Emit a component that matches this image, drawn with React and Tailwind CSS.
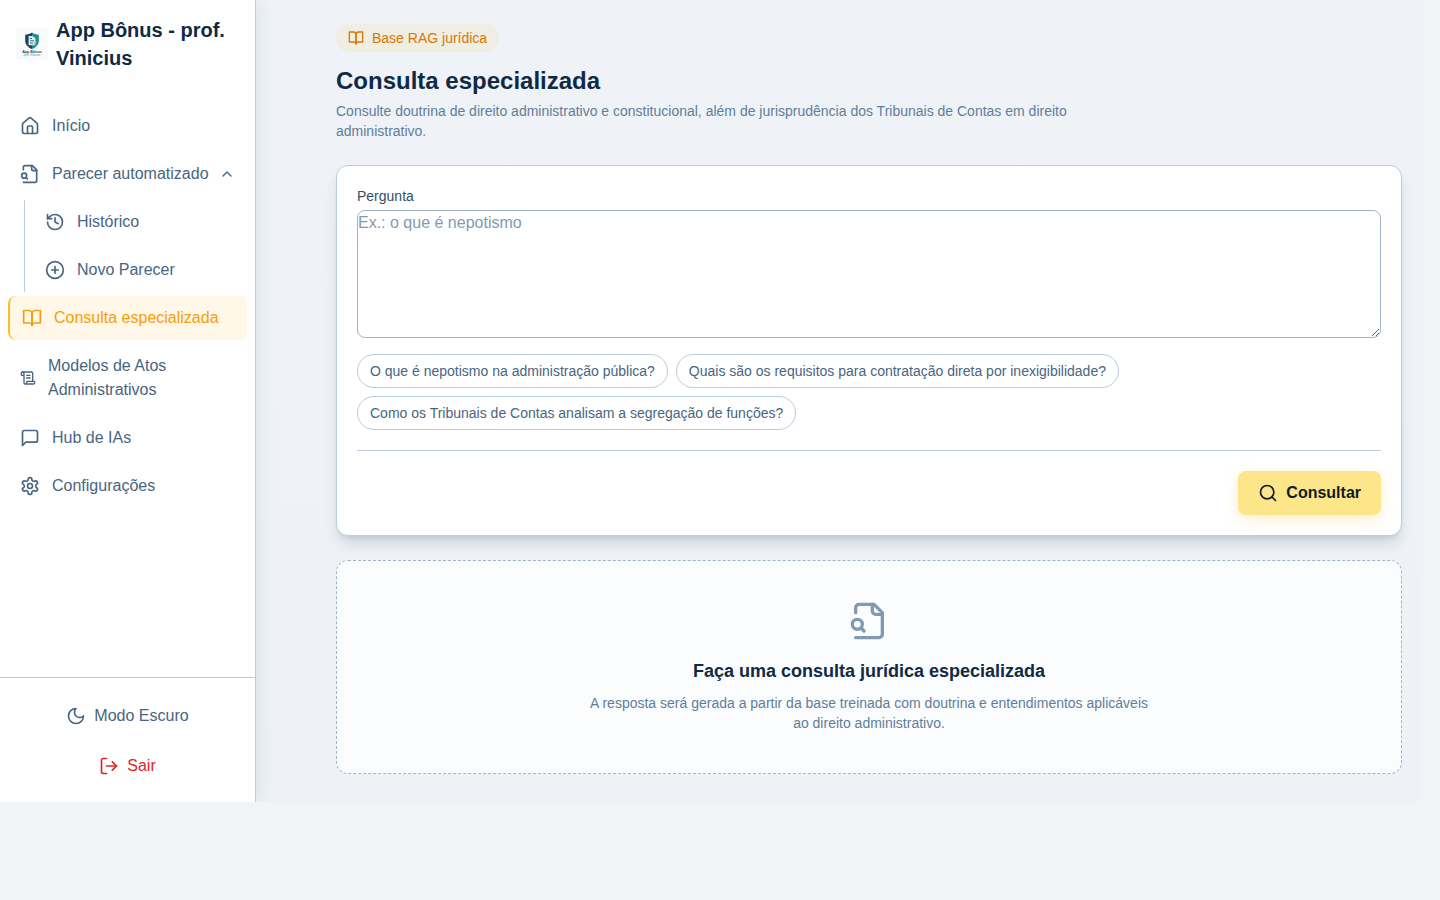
import React from "react";

const ICONS = {
  home: [
    "M15 21v-8a1 1 0 0 0-1-1h-4a1 1 0 0 0-1 1v8",
    "M3 10a2 2 0 0 1 .709-1.528l7-5.999a2 2 0 0 1 2.582 0l7 5.999A2 2 0 0 1 21 10v9a2 2 0 0 1-2 2H5a2 2 0 0 1-2-2z",
  ],
  fileSearch: [
    "M14 2v4a2 2 0 0 0 2 2h4",
    "M4 22h14a2 2 0 0 0 2-2V7l-5-5H6a2 2 0 0 0-2 2v3",
    "M2 14a3 3 0 1 0 6 0a3 3 0 1 0-6 0",
    "m9 18-1.5-1.5",
  ],
  chevronUp: ["m18 15-6-6-6 6"],
  history: ["M3 12a9 9 0 1 0 9-9 9.75 9.75 0 0 0-6.74 2.74L3 8", "M3 3v5h5", "M12 7v5l4 2"],
  circlePlus: ["M2 12a10 10 0 1 0 20 0a10 10 0 1 0-20 0", "M8 12h8", "M12 8v8"],
  book: ["M2 3h6a4 4 0 0 1 4 4v14a3 3 0 0 0-3-3H2z", "M22 3h-6a4 4 0 0 0-4 4v14a3 3 0 0 1 3-3h7z"],
  scroll: [
    "M15 12h-5",
    "M15 8h-5",
    "M19 17V5a2 2 0 0 0-2-2H4",
    "M8 21h12a2 2 0 0 0 2-2v-1a1 1 0 0 0-1-1H11a1 1 0 0 0-1 1v1a2 2 0 1 1-4 0V5a2 2 0 1 0-4 0v2a1 1 0 0 0 1 1h3",
  ],
  message: ["M21 15a2 2 0 0 1-2 2H7l-4 4V5a2 2 0 0 1 2-2h14a2 2 0 0 1 2 2z"],
  settings: [
    "M12.22 2h-.44a2 2 0 0 0-2 2v.18a2 2 0 0 1-1 1.73l-.43.25a2 2 0 0 1-2 0l-.15-.08a2 2 0 0 0-2.73.73l-.22.38a2 2 0 0 0 .73 2.73l.15.1a2 2 0 0 1 1 1.72v.51a2 2 0 0 1-1 1.74l-.15.09a2 2 0 0 0-.73 2.73l.22.38a2 2 0 0 0 2.73.73l.15-.08a2 2 0 0 1 2 0l.43.25a2 2 0 0 1 1 1.73V20a2 2 0 0 0 2 2h.44a2 2 0 0 0 2-2v-.18a2 2 0 0 1 1-1.73l.43-.25a2 2 0 0 1 2 0l.15.08a2 2 0 0 0 2.73-.73l.22-.39a2 2 0 0 0-.73-2.73l-.15-.08a2 2 0 0 1-1-1.74v-.5a2 2 0 0 1 1-1.74l.15-.09a2 2 0 0 0 .73-2.73l-.22-.38a2 2 0 0 0-2.73-.73l-.15.08a2 2 0 0 1-2 0l-.43-.25a2 2 0 0 1-1-1.73V4a2 2 0 0 0-2-2z",
    "M9 12a3 3 0 1 0 6 0a3 3 0 1 0-6 0",
  ],
  moon: ["M12 3a6 6 0 0 0 9 9 9 9 0 1 1-9-9Z"],
  logout: ["M9 21H5a2 2 0 0 1-2-2V5a2 2 0 0 1 2-2h4", "m16 17 5-5-5-5", "M21 12H9"],
  search: ["M3 11a8 8 0 1 0 16 0a8 8 0 1 0-16 0", "m21 21-4.3-4.3"],
};

function Icon({ name, className = "size-5" }) {
  return (
    <svg
      viewBox="0 0 24 24"
      fill="none"
      stroke="currentColor"
      strokeWidth="2"
      strokeLinecap="round"
      strokeLinejoin="round"
      aria-hidden="true"
      className={`shrink-0 ${className}`}
    >
      {ICONS[name].map((d) => (
        <path key={d} d={d} />
      ))}
    </svg>
  );
}

function Logo() {
  return (
    <svg viewBox="0 0 32 32" className="size-8 shrink-0" role="img" aria-label="App Bônus">
      <rect width="32" height="32" fill="#f8faf9" />
      <path d="M16 4.500c-2 1.500-4.500 2.100-6.800 2.200v6.300c0 3.700 2.900 6.500 6.800 8z" fill="#1d4063" />
      <path d="M16 4.500c2 1.500 4.500 2.100 6.800 2.200v6.300c0 3.700-2.900 6.500-6.800 8z" fill="#1f8c92" />
      <path d="M12.600 8h4.200l2.700 2.600v6.600h-6.900z" fill="#dcebed" />
      <path d="M14 10.500h2M14 12.800h4M14 15h3" stroke="#2b6780" strokeWidth="0.900" />
      <path d="m17.500 18 3-4" stroke="#55b8ac" strokeWidth="1.200" />
      <text x="16" y="24.800" textAnchor="middle" fontSize="3.700" fontWeight="700" fill="#24476a">App Bônus</text>
      <text x="16" y="27.800" textAnchor="middle" fontSize="2.600" fontWeight="700" fill="#5dbdb2">- prof. Vinicius -</text>
    </svg>
  );
}

function NavItem({ icon, label, active = false, iconClass }) {
  return (
    <a
      href="#"
      aria-current={active ? "page" : undefined}
      className={`flex items-center gap-3 rounded-lg px-3 py-2.5 ${
        active ? "border-l-2 border-[#fbbf24] bg-[#fff7e8] text-[#f59e0b]" : "text-[#486581]"
      }`}
    >
      <Icon name={icon} className={iconClass} />
      <span>{label}</span>
    </a>
  );
}

function Sidebar() {
  return (
    <aside className="z-10 flex w-64 shrink-0 flex-col border-r border-[#bcccdc] bg-white shadow-[4px_0_16px_rgba(16,42,67,0.07)]">
      <div className="flex items-center gap-2 p-4">
        <Logo />
        <span className="text-xl font-bold text-[#102a43]">App Bônus - prof. Vinicius</span>
      </div>
      <nav className="flex flex-col gap-1 px-2 py-4">
        <NavItem icon="home" label="Início" />
        <button type="button" aria-expanded="true" className="flex items-center gap-3 rounded-lg px-3 py-2.5 text-left text-[#486581]">
          <Icon name="fileSearch" />
          <span className="grow whitespace-nowrap">Parecer automatizado</span>
          <Icon name="chevronUp" className="-ml-2 size-4" />
        </button>
        <div className="ml-4 flex flex-col gap-1 border-l border-[#bcccdc] pl-2">
          <NavItem icon="history" label="Histórico" />
          <NavItem icon="circlePlus" label="Novo Parecer" />
        </div>
        <NavItem icon="book" label="Consulta especializada" active />
        <NavItem icon="scroll" label="Modelos de Atos Administrativos" iconClass="size-4" />
        <NavItem icon="message" label="Hub de IAs" />
        <NavItem icon="settings" label="Configurações" />
      </nav>
      <div className="mt-auto flex flex-col gap-2 border-t border-[#bcccdc] p-4">
        <button type="button" className="flex items-center justify-center gap-2 py-2.5 text-[#486581]">
          <Icon name="moon" />
          Modo Escuro
        </button>
        <button type="button" className="flex items-center justify-center gap-2 py-2 text-[#dc2626]">
          <Icon name="logout" />
          Sair
        </button>
      </div>
    </aside>
  );
}

const SUGGESTIONS = [
  "O que é nepotismo na administração pública?",
  "Quais são os requisitos para contratação direta por inexigibilidade?",
  "Como os Tribunais de Contas analisam a segregação de funções?",
];

export default function App() {
  return (
    <div className="min-h-screen bg-[#f0f4f7] font-['Liberation_Sans',Arial,sans-serif] text-base text-[#102a43]">
      <div className="flex overflow-hidden pr-[22px]">
        <Sidebar />
        <main className="min-w-0 grow bg-linear-to-b from-[#eff3f8] to-[#eef2f7] pt-6 pr-4 pb-7 pl-20">
          <header>
            <div className="flex w-fit items-center gap-2 rounded-full bg-[#fbbf24]/10 px-3 py-1 text-sm text-[#d97706]">
              <Icon name="book" className="size-4" />
              Base RAG jurídica
            </div>
            <h1 className="mt-[13px] text-2xl font-bold">Consulta especializada</h1>
            <p className="mt-1 max-w-3xl text-sm text-[#627d98]">
              Consulte doutrina de direito administrativo e constitucional, além de jurisprudência dos Tribunais de
              Contas em direito administrativo.
            </p>
          </header>

          <form
            onSubmit={(e) => e.preventDefault()}
            className="mt-6 rounded-xl border border-[#bcccdc] bg-white p-5 shadow-lg shadow-[#102a43]/15"
          >
            <label htmlFor="pergunta" className="block text-sm text-[#334e68]">
              Pergunta
            </label>
            <textarea
              id="pergunta"
              placeholder="Ex.: o que é nepotismo"
              className="mt-1 block h-32 w-full resize-y rounded-lg border border-[#9fb3c8] bg-white placeholder:text-[#829ab1]"
            />
            <div className="mt-4 flex flex-wrap gap-2">
              {SUGGESTIONS.map((s) => (
                <button key={s} type="button" className="rounded-full border border-[#bcccdc] px-3 py-1.5 text-sm text-[#486581]">
                  {s}
                </button>
              ))}
            </div>
            <div className="mt-5 flex justify-end border-t border-[#bcccdc] pt-5">
              <button
                type="submit"
                className="flex items-center gap-2 rounded-lg bg-[#fde68a] px-5 py-2.5 font-bold text-[#0f1b26] shadow-[0_4px_14px_rgba(251,191,36,0.25)]"
              >
                <Icon name="search" />
                Consultar
              </button>
            </div>
          </form>

          <section className="mt-6 flex flex-col items-center rounded-xl border border-dashed border-[#9fb3c8] bg-[#fbfcfe] p-10 text-center">
            <Icon name="fileSearch" className="size-10 text-[#829ab1]" />
            <h2 className="mt-4 text-lg font-bold">Faça uma consulta jurídica especializada</h2>
            <p className="mt-2 max-w-xl text-sm text-[#627d98]">
              A resposta será gerada a partir da base treinada com doutrina e entendimentos aplicáveis ao direito
              administrativo.
            </p>
          </section>
        </main>
      </div>
    </div>
  );
}
